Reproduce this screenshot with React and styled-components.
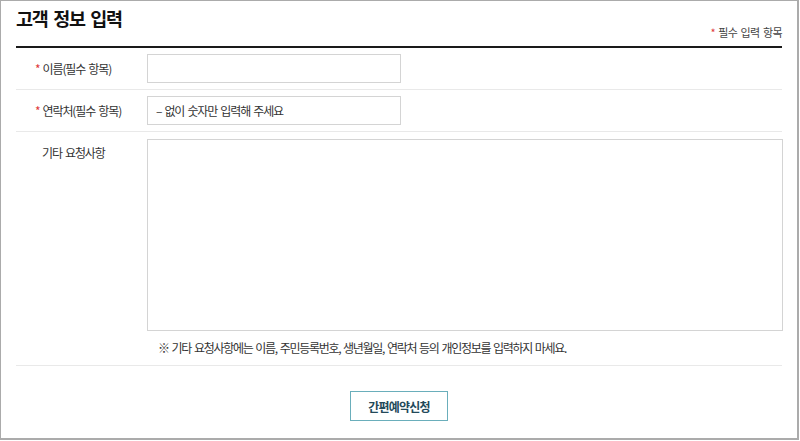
import React from "react";
import styled, { createGlobalStyle } from "styled-components";

const Global = createGlobalStyle`
  html, body { margin: 0; padding: 0; background: #fff; }
  body {
    font-family: "Noto Sans CJK KR", "Noto Sans", sans-serif;
    color: #333;
  }
  * { box-sizing: border-box; }
`;

const Frame = styled.div`
  width: 799px;
  height: 440px;
  border: 1px solid #ababab;
  border-right-width: 2px;
  border-bottom-width: 2px;
  padding: 0 15px;
  background: #fff;
`;

const Header = styled.div`
  display: flex;
  justify-content: space-between;
  align-items: flex-end;
  height: 47px;
  border-bottom: 2px solid #1a1a1a;
  padding-bottom: 7px;
`;

const Title = styled.h2`
  margin: 0;
  align-self: flex-start;
  margin-top: 5px;
  font-size: 18.5px;
  line-height: 24px;
  font-weight: 700;
  color: #111;
  letter-spacing: -1.2px;
  word-spacing: 2.5px;
`;

const RequiredNote = styled.span`
  font-size: 11px;
  line-height: 14px;
  color: #444;
  letter-spacing: -0.6px;
  word-spacing: 1.5px;
`;

const Star = styled.span`
  color: #e03a3a;
  margin-right: 3px;
`;

const Row = styled.div`
  display: grid;
  grid-template-columns: 131px 1fr;
  align-items: ${(p) => (p.$top ? "start" : "center")};
  padding: ${(p) => (p.$top ? "7px 0 9px" : "6px 0 6px")};
  border-bottom: 1px solid #e9e9e9;
`;

const Label = styled.label`
  padding-left: ${(p) => (p.$required ? "19px" : "26px")};
  padding-top: ${(p) => (p.$top ? "6px" : "0")};
  font-size: 12px;
  line-height: 16px;
  color: #333;
  letter-spacing: -1.1px;
  word-spacing: 1.5px;
`;

const Input = styled.input`
  width: 254px;
  height: 29px;
  border: 1px solid #d4d4d4;
  padding: 0 8px;
  font-family: inherit;
  font-size: 12px;
  color: #333;
  letter-spacing: -1.1px;
  word-spacing: 1.5px;
  outline: none;
  &::placeholder { color: #333; }
`;

const Field = styled.div`
  display: flex;
  flex-direction: column;
`;

const TextArea = styled.textarea`
  width: 636px;
  height: 192px;
  border: 1px solid #d4d4d4;
  resize: none;
  outline: none;
  font-family: inherit;
`;

const Caution = styled.p`
  margin: 9px 0 0 11px;
  font-size: 12px;
  line-height: 16px;
  color: #333;
  letter-spacing: -1.3px;
  word-spacing: 1.5px;
`;

const Actions = styled.div`
  display: flex;
  justify-content: center;
  padding-top: 25px;
`;

const Button = styled.button`
  width: 98px;
  height: 30px;
  background: #fff;
  border: 1px solid #6aaebb;
  color: #23495a;
  font-family: inherit;
  font-size: 12px;
  font-weight: 700;
  letter-spacing: -0.8px;
  cursor: pointer;
`;

export default function App() {
  return (
    <>
      <Global />
      <Frame>
        <Header>
          <Title>고객 정보 입력</Title>
          <RequiredNote>
            <Star>*</Star>필수 입력 항목
          </RequiredNote>
        </Header>
        <Row>
          <Label $required>
            <Star>*</Star>이름(필수 항목)
          </Label>
          <Input />
        </Row>
        <Row>
          <Label $required>
            <Star>*</Star>연락처(필수 항목)
          </Label>
          <Input placeholder="– 없이 숫자만 입력해 주세요" />
        </Row>
        <Row $top>
          <Label $top>기타 요청사항</Label>
          <Field>
            <TextArea />
            <Caution>
              ※ 기타 요청사항에는 이름, 주민등록번호, 생년월일, 연락처 등의 개인정보를 입력하지 마세요.
            </Caution>
          </Field>
        </Row>
        <Actions>
          <Button>간편예약신청</Button>
        </Actions>
      </Frame>
    </>
  );
}
